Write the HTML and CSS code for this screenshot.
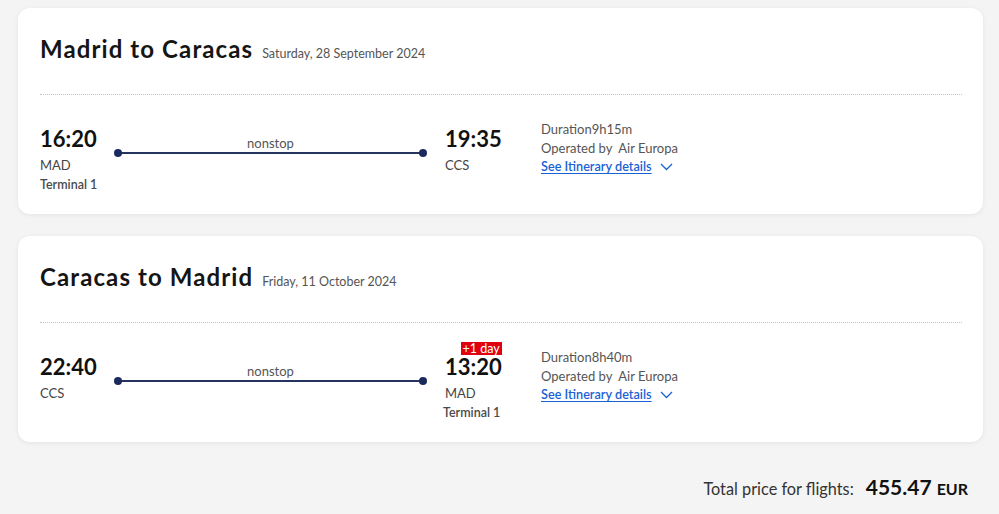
FILE: index.html
```html
<!DOCTYPE html>
<html lang="en">
<head>
<meta charset="utf-8">
<title>Flights</title>
<link rel="stylesheet" href="styles.css">
</head>
<body>
<main class="page">
  <section class="card">
    <header class="card-head">
      <h2 class="route">Madrid to Caracas</h2>
      <span class="date">Saturday, 28 September 2024</span>
    </header>
    <div class="sep"></div>
    <div class="leg">
      <div class="point dep">
        <div class="time">16:20</div>
        <div class="code">MAD</div>
        <div class="terminal">Terminal 1</div>
      </div>
      <div class="path">
        <div class="stops">nonstop</div>
        <div class="track"></div>
      </div>
      <div class="point arr">
        <div class="time">19:35</div>
        <div class="code">CCS</div>
      </div>
      <div class="info">
        <div>Duration9h15m</div>
        <div>Operated by&nbsp; Air Europa</div>
        <div class="details"><a href="#" class="link">See Itinerary details</a><svg class="chev" width="13" height="8" viewBox="0 0 13 8"><path d="M1 1l5.5 5.5L12 1" fill="none" stroke="#1a62d4" stroke-width="1.3"/></svg></div>
      </div>
    </div>
  </section>

  <section class="card">
    <header class="card-head">
      <h2 class="route">Caracas to Madrid</h2>
      <span class="date">Friday, 11 October 2024</span>
    </header>
    <div class="sep"></div>
    <div class="leg">
      <div class="point dep">
        <div class="time">22:40</div>
        <div class="code">CCS</div>
      </div>
      <div class="path">
        <div class="stops">nonstop</div>
        <div class="track"></div>
      </div>
      <div class="point arr">
        <div class="time"><span class="badge">+1 day</span>13:20</div>
        <div class="code">MAD</div>
        <div class="terminal shift">Terminal 1</div>
      </div>
      <div class="info">
        <div>Duration8h40m</div>
        <div>Operated by&nbsp; Air Europa</div>
        <div class="details"><a href="#" class="link">See Itinerary details</a><svg class="chev" width="13" height="8" viewBox="0 0 13 8"><path d="M1 1l5.5 5.5L12 1" fill="none" stroke="#1a62d4" stroke-width="1.3"/></svg></div>
      </div>
    </div>
  </section>

  <footer class="total">
    <span class="total-label">Total price for flights:</span>
    <span class="amount">455.47</span>
    <span class="currency">EUR</span>
  </footer>
</main>
</body>
</html>
```

FILE: styles.css
```css
* { box-sizing: border-box; }
html, body { margin: 0; padding: 0; }
body {
  background: #f4f4f4;
  font-family: Lato, "Noto Sans", sans-serif;
  color: #222;
}
.page {
  padding: 8px 16px 0 18px;
}
.card {
  background: #fff;
  border-radius: 12px;
  box-shadow: 0 1px 5px rgba(0,0,0,0.07);
  height: 206px;
  padding: 27px 21px 0 22px;
  margin-bottom: 22px;
}
.card-head {
  display: flex;
  align-items: baseline;
  gap: 9px;
  height: 28px;
}
.route {
  margin: 0;
  font-size: 24px;
  line-height: 28px;
  font-weight: 700;
  color: #151515;
  letter-spacing: 1.1px;
}
.date {
  font-size: 12.5px;
  color: #555;
}
.sep {
  margin-top: 31px;
  border-top: 1px dotted #c4c4c4;
}
.leg {
  display: flex;
  align-items: flex-start;
  margin-top: 31px;
}
.point { display: flex; flex-direction: column; }
.dep { width: 78px; }
.arr { width: 74px; margin-left: 22px; }
.time {
  position: relative;
  align-self: flex-start;
  font-size: 22px;
  line-height: 22px;
  margin: 2px 0;
  font-weight: 700;
  color: #111;
}
.code {
  margin-top: 4px;
  font-size: 13px;
  line-height: 19px;
  color: #444;
}
.terminal {
  font-size: 12.5px;
  line-height: 19px;
  font-weight: 600;
  color: #4a4a4a;
}
.terminal.shift { margin-left: -2px; }
.badge {
  position: absolute;
  right: 0;
  top: -14px;
  background: #e1000f;
  color: #fff;
  font-size: 12.5px;
  font-weight: 400;
  line-height: 13px;
  padding: 0 2px;
}
.path {
  width: 305px;
  display: flex;
  flex-direction: column;
  align-items: center;
}
.stops {
  margin-top: 9px;
  font-size: 13px;
  line-height: 16px;
  color: #555;
}
.track {
  position: relative;
  width: 100%;
  height: 1.5px;
  margin-top: 1px;
  background: #25335f;
}
.track::before, .track::after {
  content: "";
  position: absolute;
  top: -3px;
  width: 8px;
  height: 8px;
  border-radius: 50%;
  background: #1b2a5c;
}
.track::before { left: -4px; }
.track::after { right: -4px; }
.info {
  margin-left: 22px;
  margin-top: -6px;
  font-size: 13px;
  line-height: 18.5px;
  color: #555;
}
.details { display: flex; align-items: center; gap: 8px; }
.link {
  color: #1a62d4;
  font-weight: 600;
  font-size: 12.7px;
  text-decoration: underline;
  text-underline-offset: 2px;
}
.chev { display: block; margin-top: 1px; }
.total {
  display: flex;
  justify-content: flex-end;
  align-items: baseline;
  margin-top: 32px;
  padding-right: 15px;
  color: #333;
}
.total-label { font-size: 16.3px; margin-right: 12px; }
.amount { font-size: 21px; font-weight: 700; color: #111; margin-right: 5px; }
.currency { font-size: 16px; font-weight: 700; color: #111; }
```
